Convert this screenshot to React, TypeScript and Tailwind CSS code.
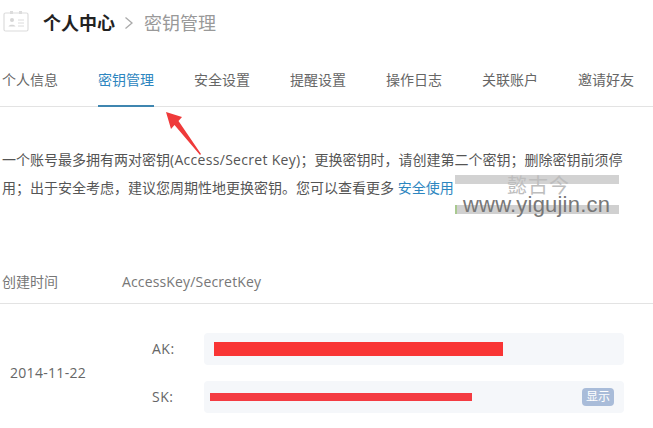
const FONT = "[font-family:'Open_Sans','Noto_Sans_CJK_SC',sans-serif]";

const TABS = ["个人信息", "密钥管理", "安全设置", "提醒设置", "操作日志", "关联账户", "邀请好友"];

function CardIcon() {
  return (
    <svg width="26" height="22" viewBox="0 0 26 22" fill="none" className="mb-[3px] shrink-0">
      <rect x="1" y="3" width="24" height="18" rx="1.5" stroke="#dcdcdc" strokeWidth="1.2" />
      <rect x="7" y="1" width="3" height="3" fill="#dcdcdc" />
      <rect x="16" y="1" width="3" height="3" fill="#dcdcdc" />
      <circle cx="9" cy="10" r="2" fill="#d6d6d6" />
      <path d="M5.500 16.500c.5-2.500 6.500-2.500 7 0z" fill="#d6d6d6" />
      <path d="M15 10h6M15 13h6M15 16h6" stroke="#dcdcdc" />
    </svg>
  );
}

function KeyRow({ label, bar, badge }: { label: string; bar: string; badge?: boolean }) {
  return (
    <div className="flex items-center">
      <span className="w-[52px] text-sm tracking-[0.5px] text-[#666]">{label}</span>
      <div className="flex h-8 w-[420px] items-center justify-between rounded bg-[#f5f7fa] pr-[10px]">
        <div className={bar} />
        {badge && (
          <span className="rounded-sm bg-[#a9bcd9] px-[4px] text-xs leading-[18px] text-white">显示</span>
        )}
      </div>
    </div>
  );
}

export default function App() {
  return (
    <div className={`relative h-[428px] w-[653px] overflow-hidden bg-white text-[#666] ${FONT}`}>
      <div className="flex h-[45px] items-center pl-[3px]">
        <CardIcon />
        <span className="ml-[14px] text-lg font-bold text-[#222]">个人中心</span>
        <svg width="10" height="14" viewBox="0 0 10 14" fill="none" className="ml-[9px]">
          <path d="M1.500 1.500 8 7l-6.500 5.500" stroke="#aaa" strokeWidth="1.300" />
        </svg>
        <span className="ml-[10px] text-lg text-[#999]">密钥管理</span>
      </div>

      <div className="mt-[14px] flex h-[48px] gap-10 border-b border-[#e3e3e3] pl-[2px]">
        {TABS.map((tab, i) => (
          <div
            key={tab}
            className={
              i === 1
                ? "h-[48px] border-b-2 border-[#3f86b0] pt-[11px] text-sm text-[#2d86c0]"
                : "pt-[11px] text-sm text-[#666]"
            }
          >
            {tab}
          </div>
        ))}
      </div>

      <p className="mt-[39px] w-[630px] pl-[2px] text-sm leading-7 text-[#555]">
        一个账号最多拥有两对密钥<span className="tracking-[0.3px]">(Access/Secret Key)</span>；更换密钥时，请创建第二个密钥；删除密钥前须停用；出于安全考虑，建议您周期性地更换密钥。您可以查看更多{" "}
        <span className="text-[#2d86c0]">安全使用</span>
      </p>

      <div className="mt-[58px] flex h-[44px] items-center border-b border-[#e3e3e3] pl-[2px] text-sm text-[#777]">
        <span className="w-[120px]">创建时间</span>
        <span className="tracking-[0.15px]">AccessKey/SecretKey</span>
      </div>

      <div className="mt-[29px] flex items-center pl-[10px]">
        <span className="w-[142px] text-sm tracking-[0.3px] text-[#666]">2014-11-22</span>
        <div className="flex flex-col gap-[16px]">
          <KeyRow label="AK:" bar="ml-[10px] h-[14px] w-[289px] bg-[#f93535]" />
          <KeyRow label="SK:" bar="ml-[6px] h-2 w-[262px] bg-[#f43c42]" badge />
        </div>
      </div>

      <svg width="40" height="46" viewBox="0 0 40 46" className="absolute left-[165px] top-[111px]">
        <path d="M1 1 17 6 13.500 10 36 43 35 44 9.500 14 6 18z" fill="#ef3a3a" />
      </svg>

      <div className="absolute left-[455px] top-[175px] h-[44px] w-[164px] bg-white">
        <div className="h-[9px] bg-[#d2d2d2]" />
        <div className="absolute left-0 right-0 top-[30px] h-[9px] bg-[#d0d0d0]" />
        <div className="absolute left-0 top-[30px] h-[9px] w-[2px] bg-[#a9c98f]" />
        <span className="absolute left-[52px] top-[-1px] text-xl leading-[24px] tracking-[1px] text-[#bdbdbd]">懿古今</span>
        <span className="absolute left-[8px] top-[19px] font-['Liberation_Sans'] text-[22px] leading-[22px] tracking-[0.2px] text-[#777]">www.yigujin.cn</span>
      </div>
    </div>
  );
}
